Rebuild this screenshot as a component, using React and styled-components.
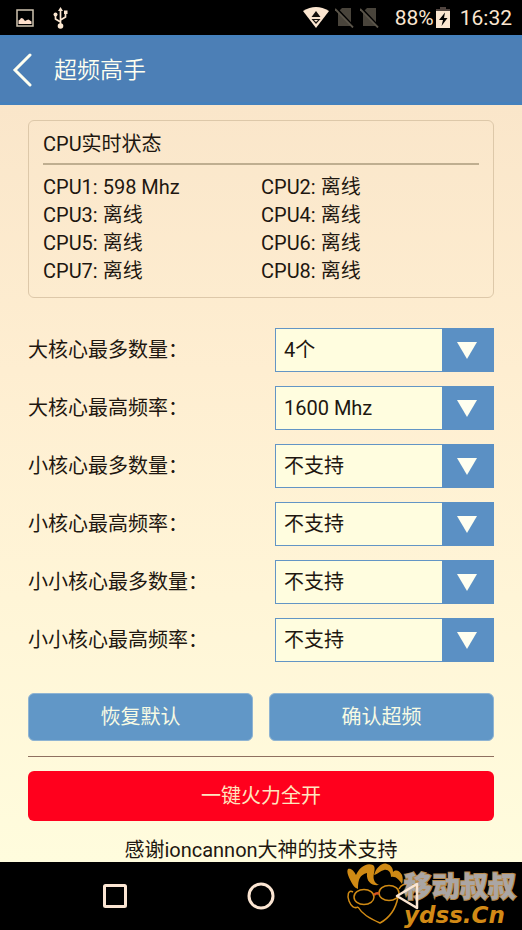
import React from 'react';
import styled, { createGlobalStyle } from 'styled-components';

const GlobalStyle = createGlobalStyle`
  * { box-sizing: border-box; }
  body {
    margin: 0;
    background: #000;
    color: #1e1710;
    font-family: Roboto, "Noto Sans CJK SC", sans-serif;
    font-size: 20px;
    line-height: 28px;
  }
  button, select { font: inherit; }
`;

const Screen = styled.div`
  min-height: 100vh;
  display: flex;
  flex-direction: column;
`;

const StatusBar = styled.div`
  height: 35px;
  display: flex;
  align-items: center;
  justify-content: space-between;
  padding: 0 10px 0 16px;
  background: #000;
  color: #fbe6d0;
`;

const StatusGroup = styled.div`
  display: flex;
  align-items: center;
  gap: ${(p) => p.$gap}px;
`;

const StatusText = styled.span`
  font-size: 21px;
`;

const BatteryStatus = styled.span`
  display: flex;
  align-items: center;
  gap: 2px;
  margin: 0 4px 0 10px;
`;

const Header = styled.header`
  height: 70px;
  display: flex;
  align-items: center;
  gap: 12px;
  padding: 0 10px;
  background: #4c7fb6;
  border-top: 3px solid #4580bc;
  border-bottom: 3px solid #4580bc;
  color: #fffff0;
`;

const BackButton = styled.button`
  display: flex;
  padding: 0;
  border: 0;
  background: none;
  color: inherit;
  cursor: pointer;
`;

const Title = styled.h1`
  margin: 0;
  padding: 2px 0 0 8px;
  font-size: 23px;
  font-weight: 350;
`;

const Content = styled.main`
  flex: 1;
  padding: 15px 28px 0;
  background: linear-gradient(#fae6ca, #feeed1 35%, #fff5d7 65%, #fffcdd);
`;

const Card = styled.section`
  padding: 9px 14px 12px;
  border: 1px solid #ddc8a9;
  border-radius: 6px;
`;

const CardTitle = styled.h2`
  margin: 0;
  padding-bottom: 5px;
  border-bottom: 2px solid #bfae90;
  font-size: 20px;
  font-weight: 400;
`;

const CoreList = styled.ul`
  display: grid;
  grid-template-columns: 1fr 1fr;
  margin: 8px 0 0;
  padding: 0;
  list-style: none;
`;

const Settings = styled.form`
  display: flex;
  flex-direction: column;
  gap: 14px;
  margin-top: 30px;
`;

const SettingRow = styled.div`
  display: grid;
  grid-template-columns: 53fr 47fr;
  align-items: center;
`;

const SelectBox = styled.div`
  position: relative;
`;

const Select = styled.select`
  display: block;
  width: 100%;
  height: 44px;
  padding: 0 60px 0 8px;
  border: 1px solid #6395c5;
  border-radius: 0;
  background: #fffddf;
  color: inherit;
  appearance: none;
`;

const SelectArrow = styled.span`
  position: absolute;
  inset: 0 0 0 auto;
  width: 52px;
  display: flex;
  align-items: center;
  justify-content: center;
  padding-right: 2px;
  background: #5b90c4;
  pointer-events: none;
`;

const Actions = styled.div`
  display: grid;
  grid-template-columns: 1fr 1fr;
  gap: 16px;
  margin-top: 17px;
`;

const Button = styled.button`
  height: 48px;
  border: 1px solid #8fb4d2;
  border-radius: 6px;
  background: #6197c7;
  color: #f8fbe4;
  cursor: pointer;
`;

const FullPowerButton = styled(Button)`
  width: 100%;
  height: 50px;
  border: 0;
  background: #ff001d;
  color: #ffe6c0;
`;

const Divider = styled.hr`
  margin: 15px 0 14px;
  border: 0;
  border-top: 1px solid #8f7060;
`;

const Thanks = styled.p`
  margin: 17px 0 0;
  line-height: 24px;
  text-align: center;
`;

const NavBar = styled.nav`
  position: relative;
  height: 68px;
  display: grid;
  grid-template-columns: repeat(3, 1fr);
  padding: 0 42px;
  background: #000;
`;

const NavButton = styled.button`
  display: flex;
  align-items: center;
  justify-content: center;
  z-index: 1;
  padding: 0;
  border: 0;
  background: none;
  color: #fbe5d2;
  cursor: pointer;
`;

const Watermark = styled.div`
  position: absolute;
  top: 0;
  right: 6px;
  display: flex;
  pointer-events: none;
`;

const WatermarkText = styled.div`
  display: flex;
  flex-direction: column;
  margin-left: -8px;
  padding-top: 11px;
`;

const WatermarkName = styled.span`
  color: #aaa6a5;
  font-size: 28px;
  font-weight: 900;
  line-height: 30px;
  -webkit-text-stroke: 2px #b88a4c;
  paint-order: stroke fill;
`;

const WatermarkSite = styled.span`
  color: #d28a16;
  font-family: "DejaVu Sans", sans-serif;
  font-size: 23px;
  font-weight: 700;
  font-style: italic;
  line-height: 24px;
`;

const cores = ['598 Mhz', '离线', '离线', '离线', '离线', '离线', '离线', '离线'];

const settings = [
  { id: 'big-count', label: '大核心最多数量：', value: '4个' },
  { id: 'big-freq', label: '大核心最高频率：', value: '1600 Mhz' },
  { id: 'small-count', label: '小核心最多数量：', value: '不支持' },
  { id: 'small-freq', label: '小核心最高频率：', value: '不支持' },
  { id: 'mini-count', label: '小小核心最多数量：', value: '不支持' },
  { id: 'mini-freq', label: '小小核心最高频率：', value: '不支持' },
];

const PictureIcon = () => (
  <svg width="18" height="18" viewBox="0 0 18 18" fill="none">
    <rect x="1" y="1" width="16" height="16" stroke="#cfc4b0" strokeWidth="1.5" />
    <path d="M2.500 15v-3.500l1.500-1 1-1.500 2 .5 2 2.500 2-1 1.500-.5 3 2V15z" fill="#ffe0cc" />
  </svg>
);

const UsbIcon = () => (
  <svg width="16" height="22" viewBox="0 0 16 22" fill="none" stroke="#fbe6d0" strokeWidth="1.7">
    <path d="M7.500 3v15M7.500 15L2.500 12V8M7.500 13l5-3V5.500" />
    <path d="M7.500 0L10 4H5z" fill="#fbe6d0" stroke="none" />
    <circle cx="7.500" cy="19" r="2.800" fill="#fbe6d0" stroke="none" />
    <circle cx="2.500" cy="7.500" r="2" fill="#fbe6d0" stroke="none" />
    <rect x="11" y="3.500" width="3.500" height="3.500" fill="#fbe6d0" stroke="none" />
  </svg>
);

const WifiIcon = () => (
  <svg width="26" height="21" viewBox="0 0 26 21">
    <path d="M0 4Q13-4 26 4L13 21z" fill="#fbe6d0" />
    <path d="M13 4l4.500 6h-9zM8.500 12h9L13 17z" fill="#15110c" />
    <path d="M11 13h4l-2 2z" fill="#fbe6d0" />
  </svg>
);

const NoSimIcon = () => (
  <svg width="19" height="21" viewBox="0 0 19 21">
    <path d="M7 1h9v18H3V5z" fill="#49443b" />
    <path d="M1 1L18 19" stroke="#000" strokeWidth="2.500" />
    <path d="M0 2L18 20.500" stroke="#5b554a" strokeWidth="1.800" />
  </svg>
);

const BatteryIcon = () => (
  <svg width="14" height="21" viewBox="0 0 14 21">
    <path d="M4 0h6v2h4v4H0V2h4z" fill="#50443f" />
    <path d="M0 4h14v17H0z" fill="#fbe6d0" />
    <path d="M9 5.500L3 13h4l-1.500 6 6-8H8z" fill="#000" />
  </svg>
);

const BackIcon = () => (
  <svg width="24" height="34" viewBox="0 0 24 34" fill="none" stroke="currentColor" strokeWidth="3" strokeLinecap="round">
    <path d="M20 2L5 17l15 15" />
  </svg>
);

const FaceLogo = () => (
  <svg width="66" height="68" viewBox="0 0 66 68" fill="none" stroke="#d08a14" strokeWidth="1.500">
    <path
      d="M7 23C3 16 0 10 2 7c3-1 6 2 8 6C13 6 20 0 27 3c4 3-1 10 1 15 1 3 3 4 5 5-7 1-13-3-12-12-7 2-9 6-9 16-2-1-4-2-5-4z"
      fill="#d08a14"
      stroke="none"
    />
    <path
      d="M28 13C30 6 36 0 41 2c4 1 6 4 6 8 3-3 7-1 9 3 1 3 1 6 0 9-3-4-6-8-11-7 0-5-3-8-7-7-4 1-6 4-10 5z"
      fill="#d08a14"
      stroke="none"
    />
    <ellipse cx="18" cy="35" rx="10" ry="7.500" />
    <ellipse cx="43" cy="31" rx="10" ry="7.500" />
    <path d="M28 33q3-3 5-1" stroke="#d65420" strokeWidth="2.500" />
    <path d="M7 30C2 27 1 34 3 39c2 5 5 8 9 6M12 45c4 7 11 11 22 16 11-6 16-15 18-26M53 27c2-4 6-6 9-4" />
  </svg>
);

export default function App() {
  return (
    <>
      <GlobalStyle />
      <Screen>
        <StatusBar>
          <StatusGroup $gap={19}>
            <PictureIcon />
            <UsbIcon />
          </StatusGroup>
          <StatusGroup $gap={6}>
            <WifiIcon />
            <NoSimIcon />
            <NoSimIcon />
            <BatteryStatus>
              <StatusText>88%</StatusText>
              <BatteryIcon />
            </BatteryStatus>
            <StatusText>16:32</StatusText>
          </StatusGroup>
        </StatusBar>

        <Header>
          <BackButton type="button" aria-label="返回">
            <BackIcon />
          </BackButton>
          <Title>超频高手</Title>
        </Header>

        <Content>
          <Card>
            <CardTitle>CPU实时状态</CardTitle>
            <CoreList>
              {cores.map((state, i) => (
                <li key={i}>{`CPU${i + 1}: ${state}`}</li>
              ))}
            </CoreList>
          </Card>

          <Settings onSubmit={(e) => e.preventDefault()}>
            {settings.map(({ id, label, value }) => (
              <SettingRow key={id}>
                <label htmlFor={id}>{label}</label>
                <SelectBox>
                  <Select id={id} defaultValue={value}>
                    <option>{value}</option>
                  </Select>
                  <SelectArrow>
                    <svg width="20" height="17" viewBox="0 0 20 17">
                      <path d="M0 0h20L10 17z" fill="#fffff0" />
                    </svg>
                  </SelectArrow>
                </SelectBox>
              </SettingRow>
            ))}
            <Actions>
              <Button type="reset">恢复默认</Button>
              <Button type="submit">确认超频</Button>
            </Actions>
          </Settings>

          <Divider />
          <FullPowerButton type="button">一键火力全开</FullPowerButton>
          <Thanks>感谢ioncannon大神的技术支持</Thanks>
        </Content>

        <NavBar>
          <NavButton type="button" aria-label="最近任务">
            <svg width="26" height="26" viewBox="0 0 26 26" fill="none" stroke="currentColor" strokeWidth="3">
              <rect x="2.500" y="2.500" width="21" height="21" rx="1" />
            </svg>
          </NavButton>
          <NavButton type="button" aria-label="主屏幕">
            <svg width="28" height="28" viewBox="0 0 28 28" fill="none" stroke="currentColor" strokeWidth="3">
              <circle cx="14" cy="14" r="12" />
            </svg>
          </NavButton>
          <NavButton type="button" aria-label="返回">
            <svg width="26" height="28" viewBox="0 0 26 28" fill="none" stroke="currentColor" strokeWidth="2.500" strokeLinejoin="round">
              <path d="M23 2v24L3 14z" />
            </svg>
          </NavButton>
          <Watermark>
            <FaceLogo />
            <WatermarkText>
              <WatermarkName>移动叔叔</WatermarkName>
              <WatermarkSite>ydss.Cn</WatermarkSite>
            </WatermarkText>
          </Watermark>
        </NavBar>
      </Screen>
    </>
  );
}
